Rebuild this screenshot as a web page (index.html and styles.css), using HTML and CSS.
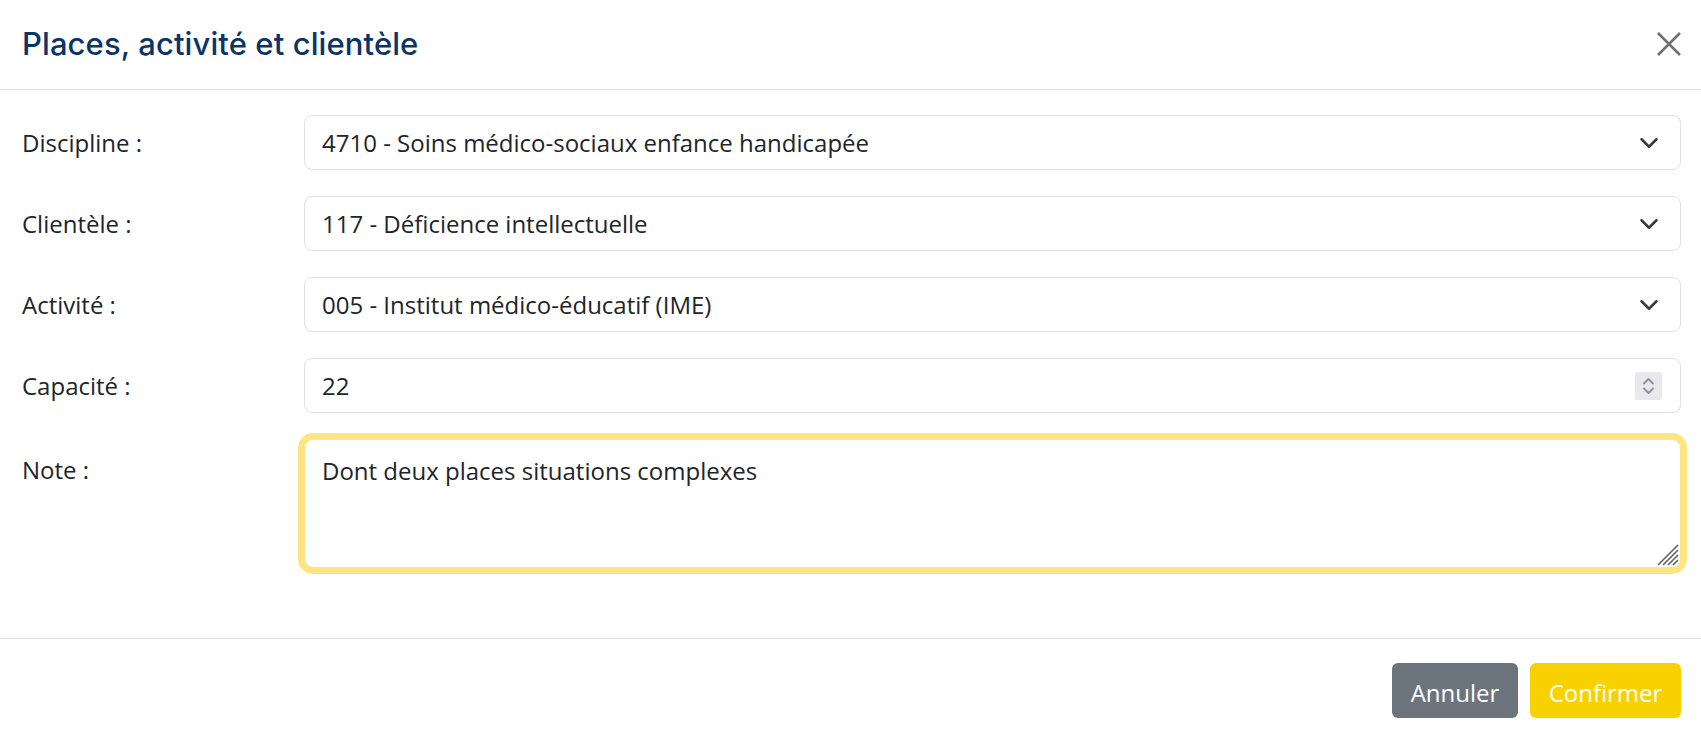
FILE: index.html
```html
<!DOCTYPE html>
<html lang="fr">
<head>
<meta charset="utf-8">
<title>Places, activité et clientèle</title>
<link rel="stylesheet" href="styles.css">
</head>
<body>
<div class="modal">
  <header class="modal-header">
    <h5 class="modal-title">Places, activité et clientèle</h5>
    <button class="btn-close" aria-label="Fermer">
      <svg width="26" height="26" viewBox="0 0 26 26"><path d="M2 2 L24 24 M24 2 L2 24" stroke="#707070" stroke-width="2.6" fill="none"/></svg>
    </button>
  </header>
  <div class="modal-body">
    <div class="form-row">
      <label class="form-label">Discipline :</label>
      <div class="form-select">
        <span>4710 - Soins médico-sociaux enfance handicapée</span>
        <svg class="chev" width="20" height="20" viewBox="0 0 16 16"><path d="m2 5 6 6 6-6" fill="none" stroke="#343a40" stroke-width="2" stroke-linecap="round" stroke-linejoin="round"/></svg>
      </div>
    </div>
    <div class="form-row">
      <label class="form-label">Clientèle :</label>
      <div class="form-select">
        <span>117 - Déficience intellectuelle</span>
        <svg class="chev" width="20" height="20" viewBox="0 0 16 16"><path d="m2 5 6 6 6-6" fill="none" stroke="#343a40" stroke-width="2" stroke-linecap="round" stroke-linejoin="round"/></svg>
      </div>
    </div>
    <div class="form-row">
      <label class="form-label">Activité :</label>
      <div class="form-select">
        <span>005 - Institut médico-éducatif (IME)</span>
        <svg class="chev" width="20" height="20" viewBox="0 0 16 16"><path d="m2 5 6 6 6-6" fill="none" stroke="#343a40" stroke-width="2" stroke-linecap="round" stroke-linejoin="round"/></svg>
      </div>
    </div>
    <div class="form-row">
      <label class="form-label">Capacité :</label>
      <div class="form-control number">
        <span>22</span>
        <span class="spinner">
          <svg width="27" height="28" viewBox="0 0 27 28"><path d="M9 11.5 L13.5 7 L18 11.5 M9 16.5 L13.5 21 L18 16.5" fill="none" stroke="#8f8f9d" stroke-width="1.9" stroke-linecap="round" stroke-linejoin="round"/></svg>
        </span>
      </div>
    </div>
    <div class="form-row last">
      <label class="form-label note">Note :</label>
      <div class="form-control textarea">
        <span>Dont deux places situations complexes</span>
        <svg class="grip" width="22" height="22" viewBox="0 0 22 22"><path d="M1 21 L21 1 M6 21 L21 6 M11 21 L21 11 M16 21 L21 16" stroke="#666" stroke-width="1.7" fill="none"/></svg>
      </div>
    </div>
  </div>
  <footer class="modal-footer">
    <button class="btn btn-secondary">Annuler</button>
    <button class="btn btn-warning">Confirmer</button>
  </footer>
</div>
</body>
</html>
```
FILE: styles.css
```css
* { box-sizing: border-box; }
html, body { margin: 0; padding: 0; background: #fff; }
body {
  font-family: "Open Sans", "Noto Sans", "Liberation Sans", sans-serif;
  font-size: 24px;
  color: #212529;
}
.modal { width: 1701px; height: 739px; display: flex; flex-direction: column; }
.modal-header {
  height: 90px;
  border-bottom: 1px solid #dee2e6;
  display: flex;
  align-items: center;
  justify-content: space-between;
  padding: 0 19px 2px 22px;
}
.modal-title {
  margin: 0;
  font-family: "Inter", "Liberation Sans", sans-serif;
  font-weight: 500;
  font-size: 31px;
  line-height: 1.2;
  color: #0b3467;
  letter-spacing: 0.1px;
}
.btn-close {
  border: 0;
  background: transparent;
  padding: 0;
  width: 26px;
  height: 26px;
  display: flex;
}
.modal-body {
  padding: 25px 20px 0 22px;
  flex: 0 0 549px;
  border-bottom: 1px solid #dee2e6;
}
.form-row {
  display: grid;
  grid-template-columns: 282px 1fr;
  margin-bottom: 26px;
}
.form-label {
  padding-top: 10px;
  line-height: 35px;
}
.form-label.note { padding-top: 13px; }
.form-select, .form-control {
  position: relative;
  height: 55px;
  border: 1px solid #dee2e6;
  border-radius: 8px;
  padding: 0 17px;
  display: flex;
  align-items: center;
  line-height: 35px;
  background: #fff;
}
.chev { position: absolute; right: 21px; top: 17px; }
.spinner {
  position: absolute;
  right: 18px;
  top: 13px;
  width: 27px;
  height: 28px;
  background: #e9e9ed;
  border-radius: 2px;
  display: flex;
}
.form-control.textarea {
  height: 129px;
  align-items: flex-start;
  padding-top: 13px;
  border-color: #fde581;
  box-shadow: 0 0 0 6px #fde581;
  border-radius: 9px;
}
.grip { position: absolute; right: 1px; bottom: 1px; }
.modal-footer {
  display: flex;
  justify-content: flex-end;
  gap: 12px;
  padding: 24px 20px 0 0;
}
.btn {
  height: 55px;
  border: 0;
  border-radius: 6px;
  font-family: "Open Sans", "Noto Sans", sans-serif;
  font-size: 24px;
  color: #fff;
  padding: 3px 12px 0;
  line-height: 35px;
}
.btn-secondary { background: #6c757d; width: 126px; }
.btn-warning { background: #f8d200; width: 151px; }
```
